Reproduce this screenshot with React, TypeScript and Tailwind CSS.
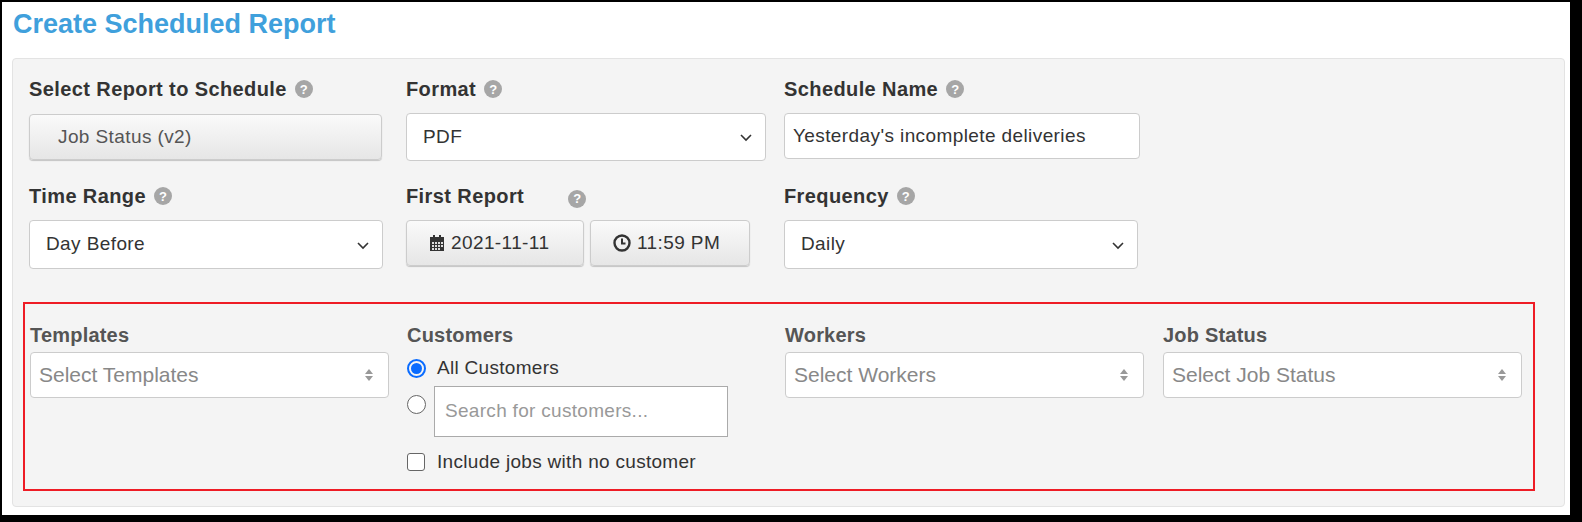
import React from "react";

const F = { fontFamily: '"Liberation Sans", Arial, sans-serif' };

function Help() {
  return (
    <span className="inline-flex items-center justify-center w-[18px] h-[18px] rounded-full bg-[#a6a6a6] text-white text-[13px] font-bold leading-none ml-2 tracking-normal">?</span>
  );
}

function Chevron() {
  return (
    <svg width="14" height="14" viewBox="0 0 14 14" className="text-[#333]">
      <path d="M2 5l5 5 5-5" fill="none" stroke="currentColor" strokeWidth="1.6" />
    </svg>
  );
}

function Updown() {
  return (
    <svg width="10" height="16" viewBox="0 0 10 16">
      <path d="M5 2l4 5H1z" fill="#999" />
      <path d="M5 14l4-5H1z" fill="#999" />
    </svg>
  );
}

function SelectBox({ text, w, h = "h-[49px]" }: { text: string; w: string; h?: string }) {
  return (
    <div className={`${w} ${h} bg-white border border-[#ccc] rounded-[4px] flex items-center justify-between pl-4 pr-3 text-[19px] tracking-[0.4px] text-[#333]`}>
      <span>{text}</span>
      <Chevron />
    </div>
  );
}

function Multi({ text, w }: { text: string; w: string }) {
  return (
    <div className={`${w} h-[46px] bg-white border border-[#ccc] rounded-[4px] flex items-center justify-between pl-[8px] pr-[14px] text-[21px] text-[#888]`}>
      <span>{text}</span>
      <Updown />
    </div>
  );
}

function Btn({ children, w }: { children: React.ReactNode; w: string }) {
  return (
    <div className={`${w} h-[46px] rounded-[4px] border border-[#ccc] bg-gradient-to-b from-[#fafafa] to-[#e6e6e6] shadow-[0_1px_1px_rgba(0,0,0,0.2)] flex items-center text-[19px] tracking-[0.4px] text-[#333]`}>
      {children}
    </div>
  );
}

function Label({ children }: { children: React.ReactNode }) {
  return <div className="h-[24px] flex items-center text-[20px] tracking-[0.4px] font-bold text-[#333]">{children}</div>;
}

function RLabel({ children }: { children: React.ReactNode }) {
  return <div className="text-[20px] font-bold text-[#555] h-[24px] tracking-[0.2px]">{children}</div>;
}

export default function App() {
  return (
    <div style={F} className="w-[1582px] h-[522px] bg-black pt-[2px] pl-[2px]">
      <div className="w-[1568px] h-[513px] bg-white pt-[7px] pl-[10px]">
        <h1 className="text-[27px] font-bold text-[#3fa0dc] leading-[30px] ml-[1px]">Create Scheduled Report</h1>
        <div className="mt-[19px] w-[1553px] h-[449px] bg-[#f4f4f4] border border-[#e3e3e3] rounded-[4px] pt-[18px] pl-[16px]">
          <div className="grid grid-cols-[377px_378px_378px] gap-y-[23px]">
            <div>
              <Label>Select Report to Schedule<Help /></Label>
              <div className="mt-[13px]">
                <Btn w="w-[353px]"><span className="pl-[28px] text-[#555]">Job Status (v2)</span></Btn>
              </div>
            </div>
            <div>
              <Label>Format<Help /></Label>
              <div className="mt-[12px]"><SelectBox text="PDF" w="w-[360px]" h="h-[48px]" /></div>
            </div>
            <div>
              <Label>Schedule Name<Help /></Label>
              <div className="mt-[12px] w-[356px] h-[46px] bg-white border border-[#ccc] rounded-[4px] flex items-center px-[8px] text-[19px] tracking-[0.4px] text-[#333]">Yesterday's incomplete deliveries</div>
            </div>
            <div>
              <Label>Time Range<Help /></Label>
              <div className="mt-[12px]"><SelectBox text="Day Before" w="w-[354px]" /></div>
            </div>
            <div>
              <Label><span>First Report</span><span className="ml-[36px]"><Help /></span></Label>
              <div className="mt-[12px] flex gap-[6px]">
                <Btn w="w-[178px]">
                  <svg width="16" height="18" viewBox="0 0 16 18" className="ml-[22px] mr-[6px]">
                    <rect x="1" y="3" width="14" height="14" fill="#333" />
                    <rect x="4" y="1" width="2" height="4" fill="#333" />
                    <rect x="10" y="1" width="2" height="4" fill="#333" />
                    <g fill="#ddd">
                      <rect x="3" y="8" width="2" height="2" /><rect x="6" y="8" width="2" height="2" /><rect x="9" y="8" width="2" height="2" /><rect x="12" y="8" width="2" height="2" />
                      <rect x="3" y="11" width="2" height="2" /><rect x="6" y="11" width="2" height="2" /><rect x="9" y="11" width="2" height="2" /><rect x="12" y="11" width="2" height="2" />
                      <rect x="3" y="14" width="2" height="2" /><rect x="6" y="14" width="2" height="2" /><rect x="9" y="14" width="2" height="2" />
                    </g>
                  </svg>
                  2021-11-11
                </Btn>
                <Btn w="w-[160px]">
                  <svg width="18" height="18" viewBox="0 0 18 18" className="ml-[22px] mr-[6px]">
                    <circle cx="9" cy="9" r="7.5" fill="none" stroke="#333" strokeWidth="2.4" />
                    <path d="M9 4.5V9.5h3.5" fill="none" stroke="#333" strokeWidth="2" />
                  </svg>
                  11:59 PM
                </Btn>
              </div>
            </div>
            <div>
              <Label>Frequency<Help /></Label>
              <div className="mt-[12px]"><SelectBox text="Daily" w="w-[354px]" /></div>
            </div>
          </div>

          <div className="mt-[33px] ml-[-6px] w-[1512px] h-[189px] border-2 border-[#ee1c25] pt-[16px] pl-[5px]">
            <div className="grid grid-cols-[377px_378px_378px_378px]">
              <div>
                <RLabel>Templates</RLabel>
                <div className="mt-[8px]"><Multi text="Select Templates" w="w-[359px]" /></div>
              </div>
              <div>
                <RLabel>Customers</RLabel>
                <div className="mt-[8px] flex items-center h-[32px]">
                  <span className="w-[19px] h-[19px] rounded-full border-2 border-[#0a6cff] flex items-center justify-center">
                    <span className="w-[11px] h-[11px] rounded-full bg-[#0a6cff]" />
                  </span>
                  <span className="ml-[11px] text-[19px] tracking-[0.3px] text-[#333]">All Customers</span>
                </div>
                <div className="flex items-start mt-[2px]">
                  <span className="mt-[9px] w-[19px] h-[19px] rounded-full border border-[#666] bg-white" />
                  <div className="ml-[8px] w-[294px] h-[51px] bg-white border border-[#aaa] flex items-center px-[10px] text-[19px] tracking-[0.3px] text-[#999]">Search for customers...</div>
                </div>
                <div className="mt-[11px] flex items-center">
                  <span className="w-[18px] h-[18px] rounded-[3px] border border-[#666] bg-white" />
                  <span className="ml-[12px] text-[19px] tracking-[0.3px] text-[#333]">Include jobs with no customer</span>
                </div>
              </div>
              <div>
                <RLabel>Workers</RLabel>
                <div className="mt-[8px]"><Multi text="Select Workers" w="w-[359px]" /></div>
              </div>
              <div>
                <RLabel>Job Status</RLabel>
                <div className="mt-[8px]"><Multi text="Select Job Status" w="w-[359px]" /></div>
              </div>
            </div>
          </div>
        </div>
      </div>
    </div>
  );
}
